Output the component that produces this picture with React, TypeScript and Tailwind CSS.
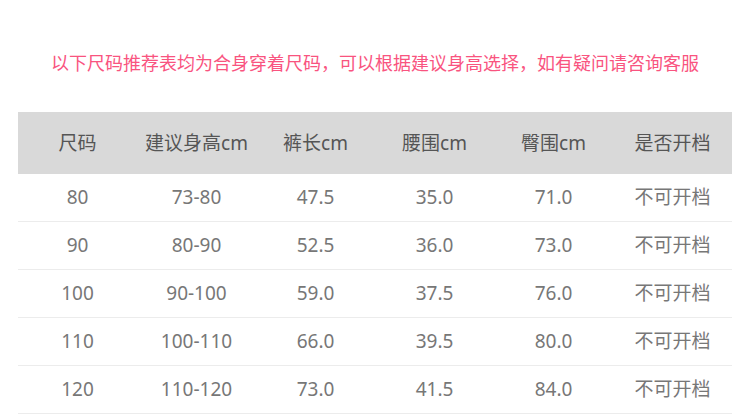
import React from "react";

const headers = ["尺码", "建议身高cm", "裤长cm", "腰围cm", "臀围cm", "是否开档"];

const rows: string[][] = [
  ["80", "73-80", "47.5", "35.0", "71.0", "不可开档"],
  ["90", "80-90", "52.5", "36.0", "73.0", "不可开档"],
  ["100", "90-100", "59.0", "37.5", "76.0", "不可开档"],
  ["110", "100-110", "66.0", "39.5", "80.0", "不可开档"],
  ["120", "110-120", "73.0", "41.5", "84.0", "不可开档"],
];

export default function App() {
  return (
    <div
      className="w-[750px] h-[414px] overflow-hidden bg-white"
      style={{ fontFamily: '"Noto Sans", "Noto Sans CJK SC", sans-serif' }}
    >
      {/* 提示 */}
      <div className="h-[112px] pt-[50px] text-center">
        <p className="text-[18px] leading-[26px] text-[#f9547f]">
          以下尺码推荐表均为合身穿着尺码，可以根据建议身高选择，如有疑问请咨询客服
        </p>
      </div>

      <div className="mx-[18px]">
        <div className="grid grid-cols-6 h-[62px] items-center bg-[#d9d9d9] text-[19px] text-[#555]">
          {headers.map((h) => (
            <div key={h} className="text-center">
              {h}
            </div>
          ))}
        </div>
        {rows.map((r, i) => (
          <div
            key={i}
            className="grid grid-cols-6 h-[48px] items-center border-b border-[#ececec] text-[19px] text-[#777]"
          >
            {r.map((c, j) => (
              <div key={j} className="text-center">
                {c}
              </div>
            ))}
          </div>
        ))}
      </div>
    </div>
  );
}
